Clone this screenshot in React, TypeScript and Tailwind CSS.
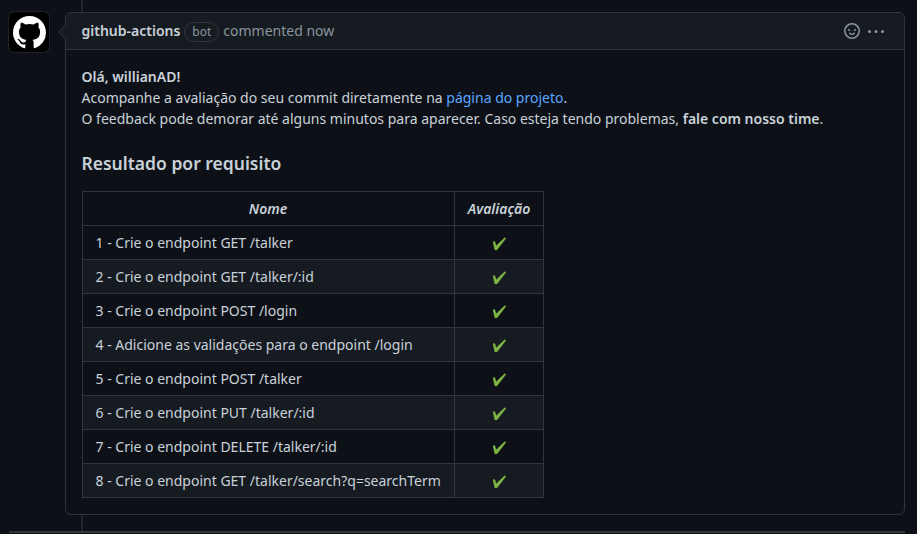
const rows = [
  '1 - Crie o endpoint GET /talker',
  '2 - Crie o endpoint GET /talker/:id',
  '3 - Crie o endpoint POST /login',
  '4 - Adicione as validações para o endpoint /login',
  '5 - Crie o endpoint POST /talker',
  '6 - Crie o endpoint PUT /talker/:id',
  '7 - Crie o endpoint DELETE /talker/:id',
  '8 - Crie o endpoint GET /talker/search?q=searchTerm',
];

function Avatar() {
  return (
    <div className="mt-3 flex size-10 shrink-0 items-center justify-center rounded-md bg-black ring-1 ring-[#1f2329]">
      <svg viewBox="0 0 16 16" className="size-[33px]" fill="#fff">
        <path d="M8 0C3.58 0 0 3.58 0 8c0 3.54 2.29 6.53 5.47 7.59.4.07.55-.17.55-.38 0-.19-.01-.82-.01-1.49-2.01.37-2.53-.49-2.69-.94-.09-.23-.48-.94-.82-1.13-.28-.15-.68-.52-.01-.53.63-.01 1.08.58 1.23.82.72 1.21 1.87.87 2.33.66.07-.52.28-.87.51-1.07-1.78-.2-3.64-.89-3.64-3.95 0-.87.31-1.59.82-2.15-.08-.2-.36-1.02.08-2.12 0 0 .67-.21 2.2.82.64-.18 1.32-.27 2-.27.68 0 1.36.09 2 .27 1.53-1.04 2.2-.82 2.2-.82.44 1.1.16 1.92.08 2.12.51.56.82 1.27.82 2.15 0 3.07-1.87 3.75-3.65 3.95.29.25.54.73.54 1.48 0 1.07-.01 1.93-.01 2.2 0 .21.15.46.55.38A8.013 8.013 0 0016 8c0-4.42-3.58-8-8-8z" />
      </svg>
    </div>
  );
}

function Smiley() {
  return (
    <svg viewBox="0 0 16 16" className="size-4" fill="#8b949e">
      <path
        fillRule="evenodd"
        d="M1.5 8a6.5 6.5 0 1113 0 6.5 6.5 0 01-13 0zM8 0a8 8 0 100 16A8 8 0 008 0zM5 8a1 1 0 100-2 1 1 0 000 2zm7-1a1 1 0 11-2 0 1 1 0 012 0zM5.32 9.636a.75.75 0 011.038.175l.007.009c.103.118.22.222.35.31.264.178.683.37 1.285.37.602 0 1.02-.192 1.285-.371.13-.088.247-.192.35-.31l.007-.008a.75.75 0 111.222.87l-.614-.431c.614.43.614.431.613.431v.001l-.001.002-.002.003-.005.007-.014.019a1.984 1.984 0 01-.184.213c-.16.166-.338.316-.53.445-.63.418-1.37.638-2.127.629-.946 0-1.652-.308-2.126-.63a3.331 3.331 0 01-.715-.657l-.014-.02-.005-.006-.002-.003v-.002h-.001l.613-.432-.614.43a.75.75 0 01.183-1.044h.001z"
      />
    </svg>
  );
}

function Kebab() {
  return (
    <svg viewBox="0 0 16 16" className="size-4" fill="#8b949e">
      <path d="M8 10a1.5 1.5 0 100-3 1.5 1.5 0 000 3zM1.5 10a1.5 1.5 0 100-3 1.5 1.5 0 000 3zm13 0a1.5 1.5 0 100-3 1.5 1.5 0 000 3z" />
    </svg>
  );
}

function Check() {
  return (
    <svg viewBox="0 0 14 14" className="mx-auto h-3.5 w-[15px]" fill="none">
      <path d="M.4 5.200Q.5 4.400 1.500 4.200Q2.300 4.100 2.600 4.900L3.900 8.600L11.300 1.200Q12.200.4 13.100.7Q13.600 1.100 13.100 1.900L5.200 12.300Q4.400 13.200 3.200 13.200Q2.300 13.200 2 12.400Z" fill="#7cb342" />
    </svg>
  );
}

function CommentHeader() {
  return (
    <header className="relative flex h-[37px] items-center rounded-t-[5px] border-b border-[#30363d] bg-[#161b22] pl-[15.5px] pr-4">
      <svg viewBox="0 0 8 16" className="absolute -left-2 top-[11px] h-4 w-2">
        <path d="M8 0L0 8L8 16Z" fill="#161b22" />
        <path d="M8 0L.7 8L8 16" fill="none" stroke="#30363d" />
      </svg>
      <span className="-mt-px font-semibold text-[#c9d1d9]">github-actions</span>
      <span className="ml-1 mt-0.5 rounded-full border border-[#30363d] px-[7px] text-xs leading-[18px] text-[#8b949e]">bot</span>
      <span className="-mt-px ml-1 text-[#8b949e]">commented now</span>
      <div className="ml-auto mr-1 flex items-center gap-2">
        <Smiley />
        <Kebab />
      </div>
    </header>
  );
}

function Results() {
  return (
    <table className="ml-[0.5px] w-[462px] table-fixed border-collapse">
      <colgroup>
        <col className="w-[372px]" />
        <col />
      </colgroup>
      <thead>
        <tr className="h-[34px]">
          <th className="border border-[#30363d] p-0 pr-px font-semibold italic">Nome</th>
          <th className="border border-[#30363d] p-0 font-semibold italic">Avaliação</th>
        </tr>
      </thead>
      <tbody>
        {rows.map((name) => (
          <tr key={name} className="h-[34px] even:bg-[#161b22]">
            <td className="whitespace-nowrap border border-[#30363d] px-[12.5px] py-0">{name}</td>
            <td className="border border-[#30363d] p-0 pt-0.5">
              <Check />
            </td>
          </tr>
        ))}
      </tbody>
    </table>
  );
}

export default function App() {
  return (
    <main className="h-[534px] w-[917px] overflow-hidden bg-[#0d1117] pl-[9px] pr-3 font-['Noto_Sans',sans-serif] text-sm leading-[21px] text-[#c9d1d9]">
      <div className="flex gap-4">
        <Avatar />
        <div className="flex w-[840px] flex-col">
          <div className="ml-4 h-3 w-0.5 bg-[#21262d]" />
          <article className="h-[503px] rounded-md border border-[#30363d]">
            <CommentHeader />
            <div className="pl-[15.5px] pr-4 pt-4">
              <p>
                <strong className="font-semibold">Olá, willianAD!</strong>
                <br />
                Acompanhe a avaliação do seu commit diretamente na <a className="text-[#58a6ff]">página do projeto</a>.
                <br />O feedback pode demorar até alguns minutos para aparecer. Caso esteja tendo problemas,{' '}
                <strong className="font-semibold">fale com nosso time</strong>.
              </p>
              <h3 className="mb-[17px] mt-[23px] text-[17.5px] font-semibold leading-[22px]">Resultado por requisito</h3>
              <Results />
            </div>
          </article>
          <div className="ml-4 h-4 w-0.5 bg-[#21262d]" />
        </div>
      </div>
      <div className="h-0.5 w-[896px] bg-[#30363d]" />
    </main>
  );
}
